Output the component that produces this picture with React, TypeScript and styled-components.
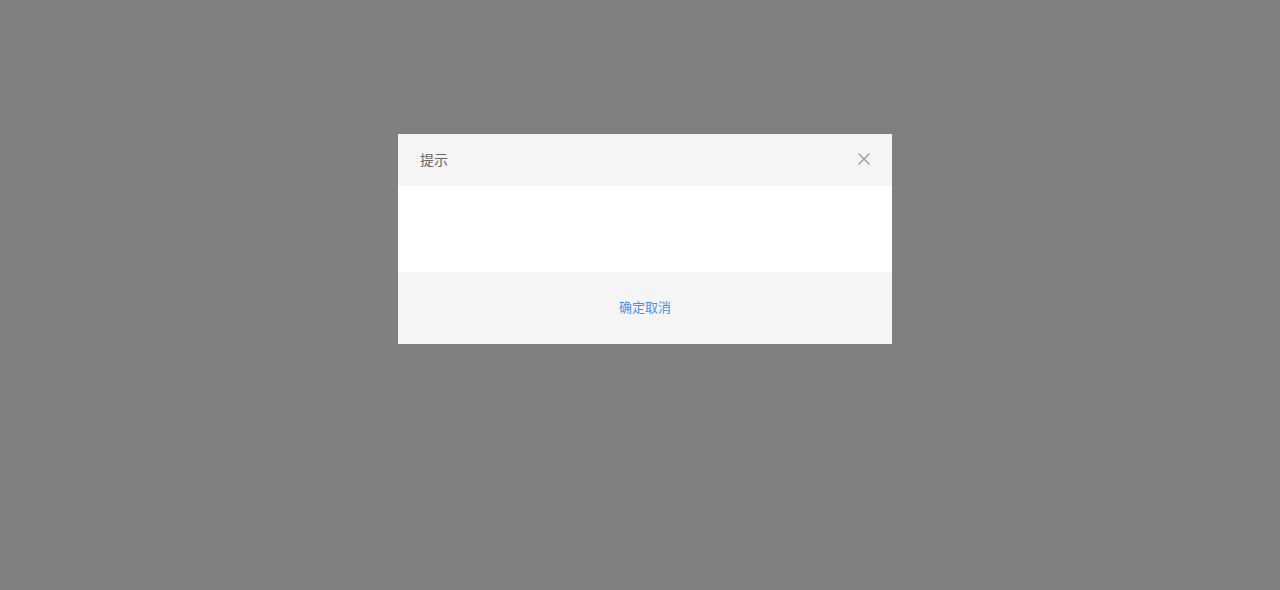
import React from "react";
import styled, { createGlobalStyle } from "styled-components";

const GlobalStyle = createGlobalStyle`
  html, body {
    margin: 0;
    padding: 0;
    background: #808080;
    font-family: "Noto Sans CJK SC", "Liberation Sans", sans-serif;
  }
`;

const Mask = styled.div`
  min-height: 100vh;
  display: flex;
  justify-content: center;
  align-items: flex-start;
  padding: 134px 0 0 10px;
  box-sizing: border-box;
`;

const Dialog = styled.div`
  width: 494px;
  background: #fff;
  display: flex;
  flex-direction: column;
`;

const Header = styled.div`
  height: 52px;
  background: #f5f5f5;
  display: flex;
  align-items: center;
  justify-content: space-between;
  padding: 0 21px 2px 22px;
  box-sizing: border-box;
`;

const Title = styled.span`
  font-size: 14px;
  color: #666;
`;

const Close = styled.button`
  border: none;
  background: none;
  padding: 0;
  width: 14px;
  height: 14px;
  display: flex;
  cursor: pointer;
`;

const Body = styled.div`
  height: 86px;
  background: #fff;
`;

const Footer = styled.div`
  height: 72px;
  background: #f5f5f5;
  display: flex;
  align-items: center;
  justify-content: center;
  padding-bottom: 4px;
  box-sizing: border-box;
`;

const Action = styled.span`
  font-size: 13px;
  color: #4a90e2;
  cursor: pointer;
`;

const App = () => {
  return (
    <>
      <GlobalStyle />
      <Mask>
        <Dialog>
          <Header>
            <Title>提示</Title>
            <Close aria-label="关闭">
              <svg width="14" height="14" viewBox="0 0 14 14">
                <path d="M1.5 1.5 L12.5 12.5 M12.5 1.5 L1.5 12.5" stroke="#999" strokeWidth="1.3" fill="none" />
              </svg>
            </Close>
          </Header>
          <Body />
          <Footer>
            <Action>确定</Action>
            <Action>取消</Action>
          </Footer>
        </Dialog>
      </Mask>
    </>
  );
};

export default App;
